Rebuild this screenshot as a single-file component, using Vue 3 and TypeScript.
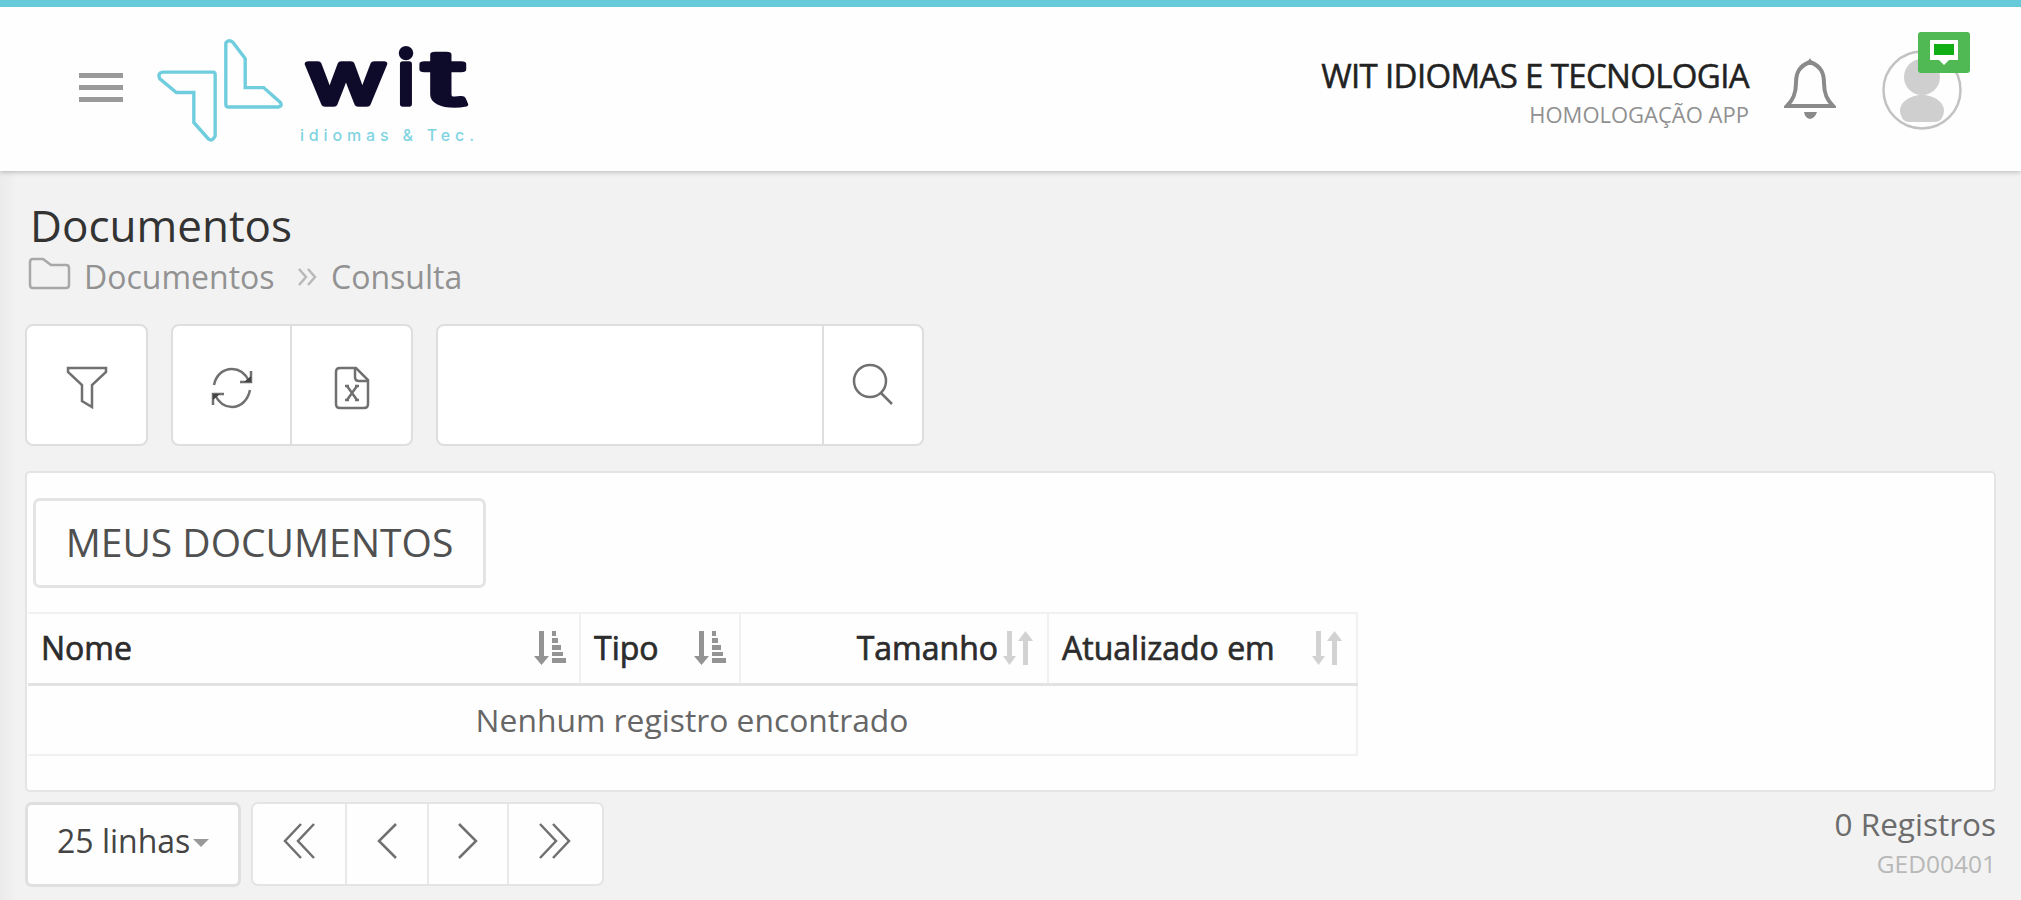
<template>
  <div class="page">
    <header class="topbar">
      <button class="menu" aria-label="Menu"><i></i><i></i><i></i></button>
      <svg class="mark" width="126" height="103" viewBox="0 0 130 106">
        <path d="M6 34H58Q60 34 60 37V100Q57 106 53 103L38 86V55H20L3 41Q0 35 6 34Z" />
        <path d="M71 4Q74 0 78 3L91 20V50H110L127 65Q130 69 125 70H73Q71 70 71 67Z" />
      </svg>
      <svg class="brand" width="180" height="110" viewBox="0 0 180 110">
        <text class="brand-name" y="66"><tspan x="6" textLength="82" lengthAdjust="spacingAndGlyphs">w</tspan><tspan x="98">i</tspan><tspan x="124" textLength="43" lengthAdjust="spacingAndGlyphs">t</tspan></text>
        <text class="brand-sub" x="1" y="103" textLength="174">idiomas &amp; Tec.</text>
      </svg>
      <div class="company">
        <strong>WIT IDIOMAS E TECNOLOGIA</strong>
        <small>HOMOLOGAÇÃO APP</small>
      </div>
      <svg class="bell" width="52" height="62" viewBox="0 0 52 62">
        <path d="M26 4C15 8 12 15 12 25C12 36 9 42 3 48H49C43 42 40 36 40 25C40 15 37 8 26 4Z" />
        <path class="solid" d="M26 0L30 7H22ZM20 54H33Q31 60 26 61Q21 60 20 54Z" />
      </svg>
      <div class="user">
        <svg width="84" height="84" viewBox="0 0 84 84">
          <circle class="ring" cx="43" cy="41" r="38.500" />
          <ellipse cx="43" cy="28" rx="18" ry="18" />
          <path d="M21 62C21 53 31 46 43 46S65 53 65 62Q64 72 57 73H29Q22 72 21 62Z" />
        </svg>
        <span class="badge">
          <svg width="30" height="27" viewBox="0 0 30 27">
            <path fill="#fff" d="M1 1H29V21H20L15 26L10 21H1Z" />
            <path fill="#12ae16" d="M5 5H25V16H5Z" />
          </svg>
        </span>
      </div>
    </header>

    <main>
      <h1>Documentos</h1>
      <nav class="crumbs">
        <svg width="44" height="34" viewBox="0 0 44 34">
          <path d="M2 28V5Q2 2 5 2H15L23 8H38Q41 8 41 11V28Q41 31 38 31H5Q2 31 2 28Z" />
        </svg>
        <span class="crumb-root">Documentos</span>
        <svg class="sep" width="21" height="20" viewBox="0 0 21 20">
          <path d="M2 2L9 10L2 18M11 2L18 10L11 18" />
        </svg>
        <span class="crumb-page">Consulta</span>
      </nav>

      <div class="toolbar">
        <div class="group">
          <button class="tool" aria-label="Filtrar">
            <svg width="42" height="44" viewBox="0 0 42 44">
              <path d="M2 2H40V6L26 19V41L16 35V19L2 6Z" />
            </svg>
          </button>
        </div>
        <div class="group actions">
          <button class="tool" aria-label="Atualizar">
            <svg width="44" height="44" viewBox="0 0 44 44">
              <path d="M4 19C6 9 13 3 22 3C29 3 35 7 39 15M40 24C38 34 31 41 22 41C15 41 9 37 5 29" />
              <path d="M41 5V16H30M3 39V28H14" />
              <path class="tip" d="M41 10V16H34ZM3 34V28H10Z" />
            </svg>
          </button>
          <button class="tool" aria-label="Exportar">
            <svg width="36" height="44" viewBox="0 0 36 44">
              <path d="M2 6Q2 2 6 2H22L34 14V38Q34 42 30 42H6Q2 42 2 38Z" />
              <path d="M21 3V11Q21 15 25 15H33M13 20L23 34M23 20L13 34M11 34H15M21 34H25M11 20H15M21 20H25" />
            </svg>
          </button>
        </div>
        <div class="group search">
          <input type="text" />
          <button class="tool" aria-label="Pesquisar">
            <svg width="42" height="44" viewBox="0 0 42 44">
              <circle cx="18" cy="19" r="16" />
              <path d="M29 31L40 42" />
            </svg>
          </button>
        </div>
      </div>

      <section class="panel">
        <button class="mine">MEUS DOCUMENTOS</button>
        <table>
          <thead>
            <tr>
              <th v-for="col in columns" :key="col.label" :class="col.key">
                <div class="head">
                  <span>{{ col.label }}</span>
                  <svg v-if="col.sorted" class="sort" width="34" height="36" viewBox="0 0 34 36">
                    <path d="M6 1H11V26H16L8.500 35L1 26H6ZM19 1H23V6H19ZM19 8H25V13H19ZM19 15H28V20H19ZM19 22H30V26H19ZM19 28H33V33H19Z" />
                  </svg>
                  <svg v-else class="sort idle" width="34" height="36" viewBox="0 0 34 36">
                    <path d="M6 1H11V26H15L8.500 35L2 26H6ZM22 35H27V11H32L24.500 1L17 11H22Z" />
                  </svg>
                </div>
              </th>
            </tr>
          </thead>
          <tbody>
            <tr>
              <td colspan="4">Nenhum registro encontrado</td>
            </tr>
          </tbody>
        </table>
      </section>

      <footer>
        <button class="rows"><span>25 linhas</span><i class="caret"></i></button>
        <div class="pager">
          <button v-for="p in pages" :key="p.name" :class="p.name" :aria-label="p.label">
            <svg width="34" height="38" viewBox="0 0 34 38"><path :d="p.icon" /></svg>
          </button>
        </div>
        <div class="totals">
          <span>0 Registros</span>
          <small>GED00401</small>
        </div>
      </footer>
    </main>
  </div>
</template>

<script setup lang="ts">
interface Column {
  key: string
  label: string
  sorted: boolean
}

const columns: Column[] = [
  { key: 'name', label: 'Nome', sorted: true },
  { key: 'type', label: 'Tipo', sorted: true },
  { key: 'size', label: 'Tamanho', sorted: false },
  { key: 'updated', label: 'Atualizado em', sorted: false }
]

const pages = [
  { name: 'first', label: 'Primeira', icon: 'M19 2L3 19L19 36M32 2L16 19L32 36' },
  { name: 'prev', label: 'Anterior', icon: 'M26 2L9 19L26 36' },
  { name: 'next', label: 'Próxima', icon: 'M8 2L25 19L8 36' },
  { name: 'last', label: 'Última', icon: 'M2 2L18 19L2 36M15 2L31 19L15 36' }
]
</script>

<style>
body {
  margin: 0;
  background: #f2f2f2;
}
</style>

<style scoped>
* {
  box-sizing: border-box;
}

.page {
  height: 900px;
  overflow: hidden;
  background: linear-gradient(90deg, #ebebeb 0, #f2f2f2 18px);
  font-family: "Open Sans", "Noto Sans", sans-serif;
  color: #444;
}

button {
  margin: 0;
  padding: 0;
  border: 0;
  background: none;
  font: inherit;
  color: inherit;
}

svg {
  display: block;
  flex: none;
  fill: none;
  stroke: #707070;
  stroke-width: 2.5;
}

.topbar {
  position: relative;
  display: flex;
  align-items: flex-start;
  height: 171px;
  padding: 0 58px 0 79px;
  border-top: 7px solid #67cadb;
  background: #fefefe;
  box-shadow: 0 1px 5px rgba(0, 0, 0, 0.25);
}

.menu {
  display: flex;
  flex-direction: column;
  gap: 7px;
  width: 44px;
  margin-top: 66px;
}

.menu i {
  height: 5px;
  background: #9a9a9a;
}

.mark {
  margin: 32px 0 0 34px;
  stroke: #6fcddd;
  stroke-width: 3.5;
}

.brand {
  margin: 31px 0 0 16px;
  overflow: visible;
}

.brand-name {
  font-family: Inter, sans-serif;
  font-size: 74px;
  font-weight: 400;
  fill: #0e0a2a;
  stroke: #0e0a2a;
  stroke-width: 5.5;
  stroke-linejoin: round;
}

.brand-sub {
  font-family: Inter, sans-serif;
  font-size: 16px;
  font-weight: 500;
  fill: #7fd4e2;
  stroke: none;
}

.company {
  display: flex;
  flex-direction: column;
  align-items: flex-end;
  margin: 47px 0 0 auto;
  white-space: nowrap;
}

.company strong {
  font-size: 33px;
  line-height: 44px;
  font-weight: 400;
  letter-spacing: -0.65px;
  color: #222;
  -webkit-text-stroke: 0.5px #222;
}

.company small {
  font-size: 22px;
  line-height: 32px;
  color: #909090;
}

.bell {
  margin: 51px 0 0 35px;
  stroke: #8a8a8a;
  stroke-width: 4;
}

.bell .solid {
  fill: #8a8a8a;
  stroke: none;
}

.user {
  position: relative;
  margin: 42px 0 0 43px;
}

.user > svg {
  fill: #cfcfcf;
  stroke: none;
}

.user .ring {
  fill: none;
  stroke: #c2c2c2;
  stroke-width: 2.5;
}

.badge {
  position: absolute;
  top: -17px;
  left: 39px;
  display: flex;
  justify-content: center;
  width: 52px;
  height: 41px;
  padding-top: 7px;
  border-radius: 3px;
  background: #50b954;
}

.badge svg {
  stroke: none;
}

main {
  padding: 24px 25px 0;
}

h1 {
  margin: 0 0 0 5px;
  font-size: 44px;
  line-height: 60px;
  font-weight: 400;
  color: #333;
}

.crumbs {
  display: flex;
  align-items: center;
  height: 42px;
  padding-left: 3px;
  font-size: 32px;
  color: #929292;
}

.crumbs svg {
  margin-top: -4px;
  stroke: #a8a8a8;
}

.crumb-root {
  width: 190px;
  margin-left: 12px;
}

.crumbs .sep {
  margin: 2px 13px 0 23px;
  stroke: #b9b9b9;
}

.toolbar {
  display: flex;
  gap: 23px;
  margin-top: 27px;
}

.group {
  display: flex;
  height: 122px;
  border: 2px solid #dedede;
  border-radius: 8px;
  background: #fff;
}

.tool {
  display: flex;
  align-items: center;
  justify-content: center;
  width: 119px;
}

.tool svg {
  margin-top: 6px;
}

.tip {
  fill: #444;
  stroke: none;
}

.tool + .tool,
.search .tool {
  border-left: 2px solid #dedede;
}

.actions .tool:first-child {
  width: 117px;
}

.actions .tool:last-child {
  width: 121px;
}

.search input {
  width: 384px;
  padding: 0 12px;
  border: 0;
  outline: 0;
  background: transparent;
  font: inherit;
}

.search .tool {
  width: 100px;
}

.search .tool svg {
  margin: -2px 0 0 -1px;
}

.panel {
  height: 321px;
  margin-top: 25px;
  padding: 25px 0 0 2px;
  border: 2px solid #e4e4e4;
  border-radius: 5px;
  background: #fefefe;
}

.mine {
  display: block;
  width: 453px;
  height: 90px;
  margin-left: 4px;
  padding-bottom: 3px;
  border: 3px solid #e4e4e4;
  border-radius: 7px;
  font-size: 39px;
  white-space: nowrap;
  color: #505050;
}

table {
  width: 1330px;
  margin: 24px 0 0 -1px;
  table-layout: fixed;
  border-collapse: collapse;
}

th {
  height: 71px;
  padding: 0 12px 1px 13px;
  border: 2px solid #f1f1f1;
  border-bottom: 3px solid #e2e2e2;
  border-left: 0;
  font-size: 32px;
  font-weight: 400;
  -webkit-text-stroke: 0.7px #2c2c2c;
  color: #2c2c2c;
}

td {
  height: 71px;
  padding: 0;
  border: 2px solid #f1f1f1;
  border-left: 0;
  font-size: 31.800px;
  text-align: center;
  color: #666;
}

.head {
  display: flex;
  align-items: center;
  justify-content: space-between;
  white-space: nowrap;
}

.head span {
  margin-top: -1px;
}

.name {
  width: 552px;
}

.type {
  width: 160px;
}

.size {
  width: 308px;
}

.size .head {
  justify-content: flex-end;
  gap: 3px;
}

.sort {
  fill: #949494;
  stroke: none;
}

.sort.idle {
  fill: #d2d2d2;
}

footer {
  display: flex;
  align-items: flex-start;
  margin-top: 10px;
}

.rows {
  display: flex;
  align-items: center;
  width: 216px;
  height: 85px;
  padding: 0 0 8px 29px;
  border: 3px solid #dfdfdf;
  border-radius: 7px;
  background: #fefefe;
  font-size: 32px;
  white-space: nowrap;
}

.caret {
  margin: 4px 0 0 3px;
  border: 8px solid transparent;
  border-top: 8px solid #999;
  border-bottom: 0;
}

.pager {
  display: flex;
  height: 84px;
  margin-left: 10px;
  border: 2px solid #e4e4e4;
  border-radius: 7px;
  background: #fefefe;
}

.pager button {
  display: flex;
  align-items: center;
  justify-content: center;
  width: 92px;
}

.pager button + button {
  border-left: 2px solid #e8e8e8;
}

.pager .prev {
  width: 82px;
}

.pager .next {
  width: 80px;
}

.pager .last {
  width: 95px;
}

.pager svg {
  margin: -6px 0 0 -1px;
}

.totals {
  display: flex;
  flex-direction: column;
  align-items: flex-end;
  margin-left: auto;
  white-space: nowrap;
}

.totals span {
  font-size: 31.500px;
  line-height: 44px;
  color: #6c6c6c;
}

.totals small {
  font-size: 24.500px;
  line-height: 36px;
  color: #b8b8b8;
}
</style>
